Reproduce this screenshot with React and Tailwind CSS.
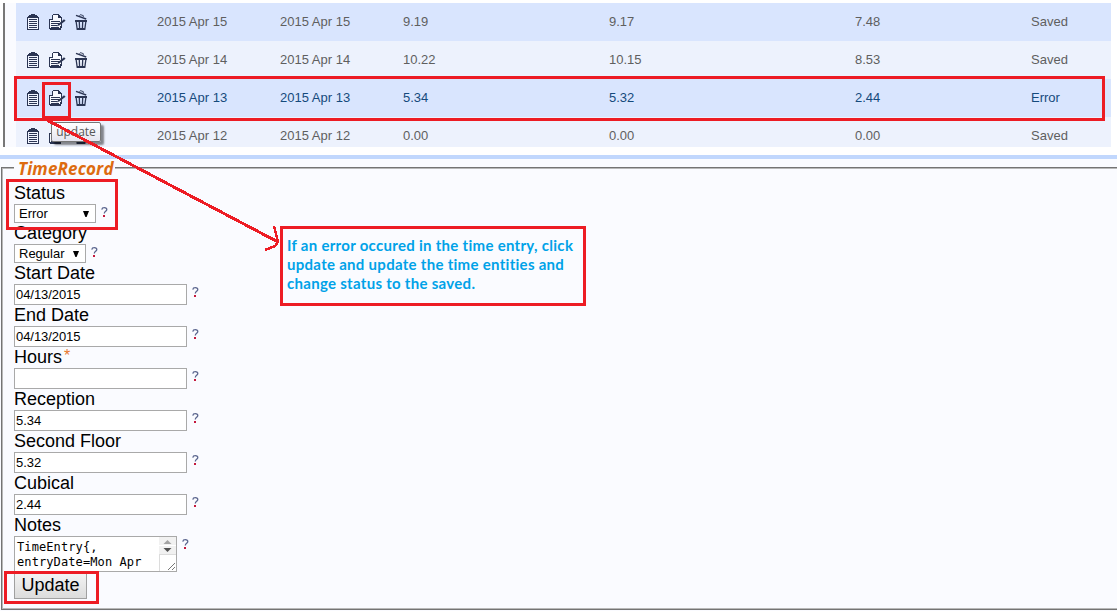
const rows = [
  { date: '2015 Apr 15', a: '9.19', b: '9.17', c: '7.48', status: 'Saved' },
  { date: '2015 Apr 14', a: '10.22', b: '10.15', c: '8.53', status: 'Saved' },
  { date: '2015 Apr 13', a: '5.34', b: '5.32', c: '2.44', status: 'Error' },
  { date: '2015 Apr 12', a: '0.00', b: '0.00', c: '0.00', status: 'Saved' },
];

function ClipboardIcon() {
  return (
    <svg width="12" height="16" viewBox="0 0 12 16" fill="#2b3553" shapeRendering="crispEdges">
      <path d="M4 0h4v1h2v1h1v1h1v13H0V3h1V2h1V1h2z" />
      <path fill="#f1f5ff" d="M1 4h10v11H1z" />
      <path d="M2 5h8v1H2zM2 7h8v1H2zM2 9h8v1H2zM2 11h8v1H2zM2 13h8v1H2z" />
    </svg>
  );
}

function EditIcon() {
  return (
    <svg width="17" height="16" viewBox="0 0 17 16">
      <g shapeRendering="crispEdges">
        <path d="M4 0h6v1h1v1h1v1h1v11h-1v2H1v-1H0V5h3V1h1z" fill="#2b3553" />
        <path d="M4 1h5v3h3v8h-1v2H1V6h3z" fill="#f8faff" />
        <path d="M2 7h9v1H2zM2 9h8v1H2zM2 11h6v1H2zM2 13h8v1H2z" fill="#2b3553" />
      </g>
      <path d="M7.6 12.4l1.6-2.4L15 5.2l1.6 1.5-6 4.6z" fill="#2b3553" />
    </svg>
  );
}

function TrashIcon() {
  return (
    <svg width="12" height="16" viewBox="0 0 12 16" fill="none">
      <path d="M1 1.4L11.2 5" stroke="#2b3553" strokeWidth="1.4" />
      <path d="M4.6 1.8L5.4.6 8.4 1.7 8.2 3" stroke="#2b3553" strokeWidth=".9" />
      <path d="M0 6h12v2H0z" fill="#2b3553" />
      <path d="M1.2 8l1 7.3h7.6l1-7.3M4.3 8l.3 7M7.7 8l-.3 7" stroke="#2b3553" strokeWidth="1.3" />
      <path d="M2 14h8v2H2z" fill="#2b3553" />
    </svg>
  );
}

function HelpMark({ className = '' }) {
  return (
    <svg className={'shrink-0 ' + className} width="7" height="10" viewBox="0 0 7 10" fill="none">
      <path d="M.8 2.6C1 1.1 2 .7 3.3.7c1.5 0 2.5.7 2.5 1.9 0 1.8-2.5 1.7-2.5 4" stroke="#5c678f" strokeWidth="1.3" />
      <path d="M2 8h2v2H2z" fill="#c4183c" />
    </svg>
  );
}

function Label({ children }) {
  return <div className="h-[21px] text-[18px] leading-[21px] whitespace-nowrap text-black">{children}</div>;
}

function SelectField({ label, value, width }) {
  return (
    <div>
      <Label>{label}</Label>
      <div className="flex h-[19px]">
        <div className={'flex items-center justify-between border border-[#a9a9a9] bg-white pr-[6px] pl-1 text-[13px] leading-[17px] text-black ' + width}>
          <span>{value}</span>
          <svg width="6" height="6" viewBox="0 0 6 6"><path d="M0 0h6L3.6 6H2.4z" fill="#000" /></svg>
        </div>
        <HelpMark className="mt-[3px] ml-[5px]" />
      </div>
    </div>
  );
}

function TextField({ label, value, required }) {
  return (
    <div>
      <Label>
        {label}
        {required && <sup className="relative -top-[2px] ml-[2px] text-[16px] leading-none text-[#e8762c]">*</sup>}
      </Label>
      <div className="flex h-[21px]">
        <div className="w-[173px] border border-[#a9a9a9] bg-white pl-[1px] text-[13px] leading-[20px] tracking-[-0.06px] text-black">{value}</div>
        <HelpMark className="mt-[3px] ml-[5px]" />
      </div>
    </div>
  );
}

export default function App() {
  return (
    <div className="relative h-[611px] w-[1117px] overflow-hidden bg-white font-['Liberation_Sans',Arial,sans-serif]">
      <div className="flex h-[155px] pt-[3px] pl-[3px]">
        <div className="h-[144px] w-[13px] border-l-2 border-[#777] bg-[#fafbff]" />
        <div className="h-[144px] w-[1095px] overflow-hidden">
          {rows.map((r, i) => (
            <div
              key={r.date}
              className={
                'grid h-[38px] grid-cols-[141px_123px_123px_206px_246px_176px_80px] text-[13px] leading-[37px] ' +
                (i % 2 ? 'bg-[#edf2fd] ' : 'bg-[#d9e5fe] ') +
                (i === 2 ? 'text-[#154a7c]' : 'text-[#5f5f5f]')
              }
            >
              <div className="flex pt-[11px] pl-[11px]">
                <ClipboardIcon />
                <span className="ml-[10px]"><EditIcon /></span>
                <span className="ml-[9px]"><TrashIcon /></span>
              </div>
              <div>{r.date}</div>
              <div>{r.date}</div>
              <div>{r.a}</div>
              <div>{r.b}</div>
              <div>{r.c}</div>
              <div>{r.status}</div>
            </div>
          ))}
        </div>
      </div>
      <div className="h-1 bg-[#c1d7fd]" />
      <div className="h-[452px] bg-[#fafbff] pt-2 pl-[1px]">
        <div className="h-[443px] border-y border-l border-[#747474]">
          <div className="h-[441px] border-y border-l border-[#b8b8b8]">
            <div className="-mt-[10px] ml-[11px] h-[24px] w-[101px] bg-[#fafbff] pl-[4px] font-['Open_Sans',sans-serif] text-[17px] leading-[20px] font-bold tracking-[0.15px] whitespace-nowrap text-[#dd6b10] italic">
              TimeRecord
            </div>
            <div className="pl-[11px]">
              <SelectField label="Status" value="Error" width="w-[82px]" />
              <SelectField label="Category" value="Regular" width="w-[72px]" />
              <TextField label="Start Date" value="04/13/2015" />
              <TextField label="End Date" value="04/13/2015" />
              <TextField label="Hours" value="" required />
              <TextField label="Reception" value="5.34" />
              <TextField label="Second Floor" value="5.32" />
              <TextField label="Cubical" value="2.44" />
              <Label>Notes</Label>
              <div className="flex h-9">
                <div className="flex w-[163px] justify-between border border-[#a9a9a9] bg-white">
                  <div className="pt-[3px] pl-[2px] font-['DejaVu_Sans_Mono',monospace] text-[12px] leading-[15px] tracking-[0.1px] whitespace-nowrap text-black">
                    <div>TimeEntry{'{'},</div>
                    <div>entryDate=Mon Apr</div>
                  </div>
                  <svg width="17" height="34" viewBox="0 0 17 34">
                    <path d="M0 0h17v17H0z" fill="#f1f1f1" />
                    <path d="M0 8.5h17" stroke="#fff" />
                    <path d="M4.5 7L8.5 3l4 4z" fill="#a3a3a3" />
                    <path d="M4.5 11h8l-4 4z" fill="#505050" />
                    <path d="M0 17.5h17M.5 17v17" stroke="#dcdcdc" />
                    <path d="M9 33l7-7M13 33l3-3" stroke="#777" strokeWidth="1" />
                  </svg>
                </div>
                <HelpMark className="mt-[3px] ml-[5px]" />
              </div>
              <button className="block h-[27px] w-[73px] border border-[#a0a0a0] bg-linear-to-b from-[#f4f4f4] to-[#dcdcdc] text-[18px] leading-[23px] text-black">
                Update
              </button>
            </div>
          </div>
        </div>
      </div>

      <div className="absolute top-[122px] left-[51px] h-[20px] w-[50px] rounded-[2px] border border-[#767676] bg-linear-to-b from-white to-[#e5e5f0] text-center font-['Open_Sans',sans-serif] text-[12px] leading-[18px] text-[#575757] shadow-[3px_3px_2px_rgba(0,0,0,0.45)]">
        update
      </div>

      <div className="absolute top-[76px] left-[14px] h-[45px] w-[1091px] border-3 border-[#ed1c24]" />
      <div className="absolute top-[82px] left-[42px] h-[37px] w-[29px] border-3 border-[#ed1c24]" />
      <div className="absolute top-[179px] left-[6px] h-[51px] w-[112px] border-3 border-[#ed1c24]" />
      <div className="absolute top-[571px] left-[4px] h-[33px] w-[95px] border-3 border-[#ed1c24]" />
      <div className="absolute top-[226px] left-[280px] h-[80px] w-[306px] border-3 border-[#ed1c24] pt-[7px] pl-[4px] font-[Lato,sans-serif] text-[15px] leading-[19px] font-bold tracking-[0.29px] whitespace-nowrap text-[#00a2e8]">
        <div>If an error occured in the time entry, click</div>
        <div>update and update the time entities and</div>
        <div>change status to the saved.</div>
      </div>
      <svg className="pointer-events-none absolute top-0 left-0" width="300" height="300" viewBox="0 0 300 300" fill="none" stroke="#ed1c24" strokeWidth="3" shapeRendering="crispEdges">
        <path d="M45 119L278 242" />
        <path d="M274 226l3 12 1 4-3 4-10 4" strokeWidth="2.5" />
      </svg>
    </div>
  );
}
